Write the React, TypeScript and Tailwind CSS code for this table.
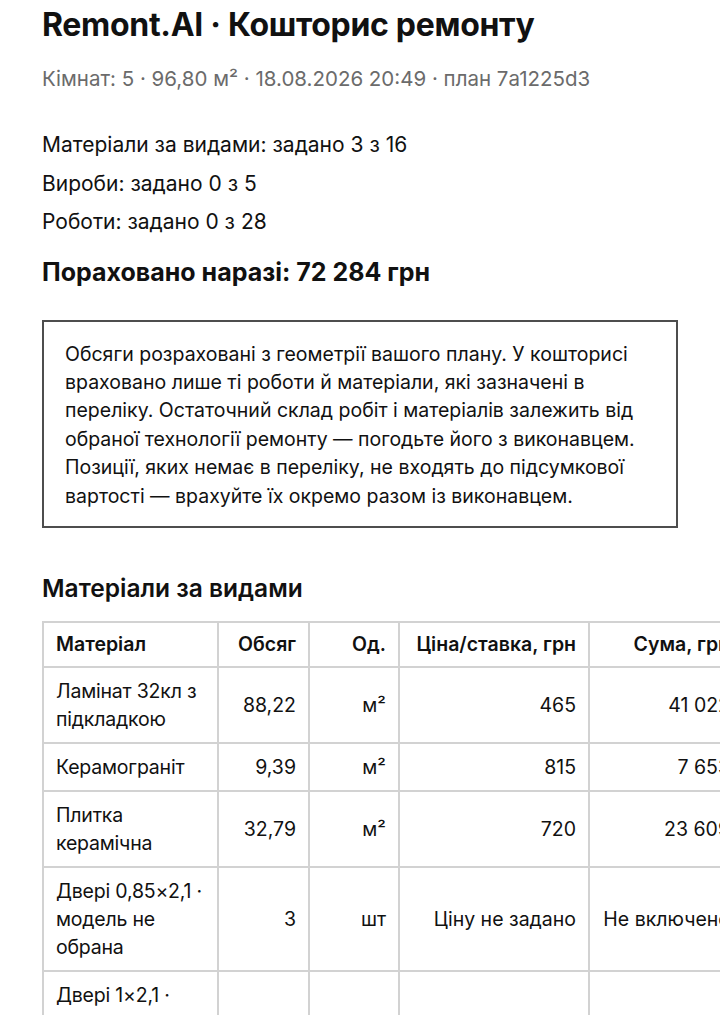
import React from "react";

type Row = {
  name: string[];
  qty: string;
  unit: string;
  price: string;
  sum: string;
};

const rows: Row[] = [
  { name: ["Ламінат 32кл з", "підкладкою"], qty: "88,22", unit: "м²", price: "465", sum: "41 022" },
  { name: ["Керамограніт"], qty: "9,39", unit: "м²", price: "815", sum: "7 653" },
  { name: ["Плитка", "керамічна"], qty: "32,79", unit: "м²", price: "720", sum: "23 609" },
  { name: ["Двері 0,85×2,1 ·", "модель не", "обрана"], qty: "3", unit: "шт", price: "Ціну не задано", sum: "Не включено" },
  { name: ["Двері 1×2,1 ·", "модель не", "обрана"], qty: "1", unit: "шт", price: "Ціну не задано", sum: "Не включено" },
];

const th = "border-2 border-[#d2d2d2] px-[12px] pt-[7px] pb-[8px] font-semibold";
const td = "border-2 border-[#d2d2d2] px-[12px] py-[9px]";

const App = () => {
  return (
    <div className="min-h-screen bg-white px-[42px] pt-[6px] font-['Inter',sans-serif] text-[#111]">
      <h1 className="text-[32px] font-bold leading-[38px] tracking-[-0.3px]">
        Remont.AI · Кошторис ремонту
      </h1>
      <p className="mt-[21px] text-[20.5px] leading-[28px] text-[#6b6b6b]">
        Кімнат: 5 · 96,80 м² · 18.08.2026 20:49 · план 7a1225d3
      </p>

      <div className="mt-[33px] text-[21px] leading-[38.5px]">
        <p>Матеріали за видами: задано 3 з 16</p>
        <p>Вироби: задано 0 з 5</p>
        <p>Роботи: задано 0 з 28</p>
      </div>

      <p className="mt-[14px] text-[25px] font-bold leading-[32px]">
        Пораховано наразі: 72 284 грн
      </p>

      <div className="mt-[32px] border-2 border-[#4d4d4d] px-[21px] pt-[18px] pb-[16px] text-[19.5px] leading-[28.4px]">
        Обсяги розраховані з геометрії вашого плану. У кошторисі враховано лише ті
        роботи й матеріали, які зазначені в переліку. Остаточний склад робіт і
        матеріалів залежить від обраної технології ремонту — погодьте його з
        виконавцем. Позиції, яких немає в переліку, не входять до підсумкової
        вартості — врахуйте їх окремо разом із виконавцем.
      </div>

      <h2 className="mt-[44px] text-[24.5px] font-semibold leading-[32px]">
        Матеріали за видами
      </h2>

      <table className="mt-[17px] w-[700px] table-fixed border-collapse text-[19.5px] leading-[28px]">
        <colgroup>
          <col className="w-[175px]" />
          <col className="w-[91px]" />
          <col className="w-[90px]" />
          <col className="w-[190px]" />
          <col className="w-[154px]" />
        </colgroup>
        <thead>
          <tr>
            <th className={`${th} text-left`}>Матеріал</th>
            <th className={`${th} text-right`}>Обсяг</th>
            <th className={`${th} text-right`}>Од.</th>
            <th className={`${th} text-right whitespace-nowrap`}>Ціна/ставка, грн</th>
            <th className={`${th} text-right whitespace-nowrap`}>Сума, грн</th>
          </tr>
        </thead>
        <tbody>
          {rows.map((r, i) => (
            <tr key={i}>
              <td className={`${td} text-left`}>
                {r.name.map((line, j) => (
                  <div key={j} className="whitespace-nowrap tracking-[-0.2px]">
                    {line}
                  </div>
                ))}
              </td>
              <td className={`${td} text-right`}>{r.qty}</td>
              <td className={`${td} text-right`}>{r.unit}</td>
              <td className={`${td} text-right whitespace-nowrap`}>{r.price}</td>
              <td className={`${td} text-right whitespace-nowrap`}>{r.sum}</td>
            </tr>
          ))}
        </tbody>
      </table>
      <div className="h-[40px]" />
    </div>
  );
};

export default App;
